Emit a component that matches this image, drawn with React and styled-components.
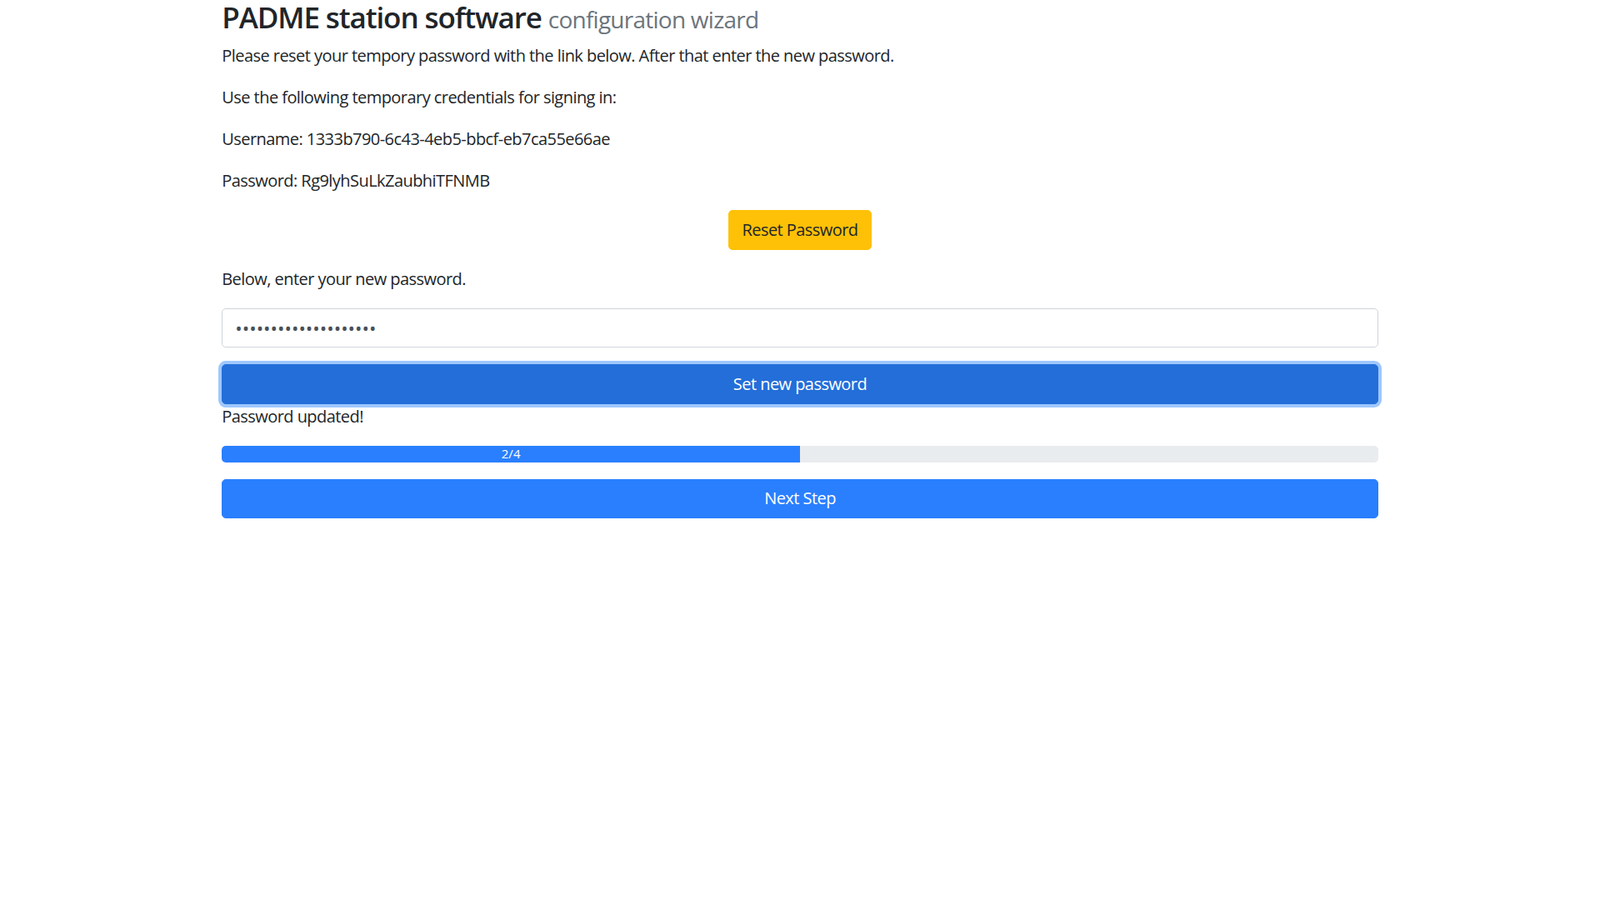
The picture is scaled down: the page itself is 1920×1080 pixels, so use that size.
import React from "react";
import styled, { createGlobalStyle } from "styled-components";

const GlobalStyle = createGlobalStyle`
  body {
    margin: 0;
    background: #fff;
    color: #212529;
    font-family: "Open Sans", "Noto Sans", sans-serif;
    font-size: 20px;
    line-height: 1.5;
    letter-spacing: -0.55px;
  }
  * { box-sizing: border-box; }
`;

const Container = styled.div`
  max-width: 1425px;
  margin: 0 auto;
  padding: 0 18.75px;
`;

const Title = styled.h3`
  margin: 0 0 10px;
  font-size: 35px;
  font-weight: 600;
  line-height: 1.2;
  letter-spacing: -1.1px;
  color: #212529;
`;

const Muted = styled.small`
  font-size: 28px;
  font-weight: 400;
  letter-spacing: -0.75px;
  color: #6c757d;
`;

const Text = styled.p`
  margin: 0 0 20px;
  font-size: 20px;
  line-height: 30px;
`;

const Center = styled.div`
  display: flex;
  justify-content: center;
  margin-bottom: 20px;
`;

const Button = styled.button`
  display: block;
  width: ${(p) => (p.$block ? "100%" : "auto")};
  height: 47.5px;
  padding: 0 15px;
  border: 1px solid ${(p) => p.$bg};
  border-radius: 5px;
  background: ${(p) => p.$bg};
  color: ${(p) => p.$fg};
  font-family: inherit;
  font-size: 20px;
  line-height: 30px;
  letter-spacing: -0.55px;
  cursor: pointer;
  box-shadow: ${(p) => (p.$focus ? "0 0 0 4px #9fc7fd" : "none")};
`;

const Input = styled.input`
  display: block;
  width: 100%;
  height: 47.5px;
  padding: 7.5px 15px;
  border: 1px solid #ced4da;
  border-radius: 5px;
  font-family: inherit;
  font-size: 22.5px;
  letter-spacing: 0;
  color: #495057;
  background: #fff;
  margin-bottom: 20px;
  outline: none;
`;

const Progress = styled.div`
  display: flex;
  height: 20px;
  border-radius: 5px;
  overflow: hidden;
  background: #e9ecef;
  margin-bottom: 20px;
`;

const Bar = styled.div`
  display: flex;
  align-items: center;
  justify-content: center;
  background: #2a7fff;
  color: #fff;
  font-size: 15px;
  letter-spacing: 0;
  line-height: 1;
`;

export default function App() {
  const step = 2;
  const total = 4;
  return (
    <>
      <GlobalStyle />
      <Container>
        <Title>
          PADME station software <Muted>configuration wizard</Muted>
        </Title>
        <Text>Please reset your tempory password with the link below. After that enter the new password.</Text>
        <Text>Use the following temporary credentials for signing in:</Text>
        <Text>Username: 1333b790-6c43-4eb5-bbcf-eb7ca55e66ae</Text>
        <Text>Password: Rg9lyhSuLkZaubhiTFNMB</Text>
        <Center>
          <Button $bg="#ffc107" $fg="#212529">Reset Password</Button>
        </Center>
        <Text>Below, enter your new password.</Text>
        <Input type="password" defaultValue="Rg9lyhSuLkZaubhiTFNM" />
        <Button $block $focus $bg="#236ed9" $fg="#fff">Set new password</Button>
        <Text>Password updated!</Text>
        <Progress>
          <Bar style={{ width: `${(step / total) * 100}%` }}>{step}/{total}</Bar>
        </Progress>
        <Button $block $bg="#2a7fff" $fg="#fff">Next Step</Button>
      </Container>
    </>
  );
}
